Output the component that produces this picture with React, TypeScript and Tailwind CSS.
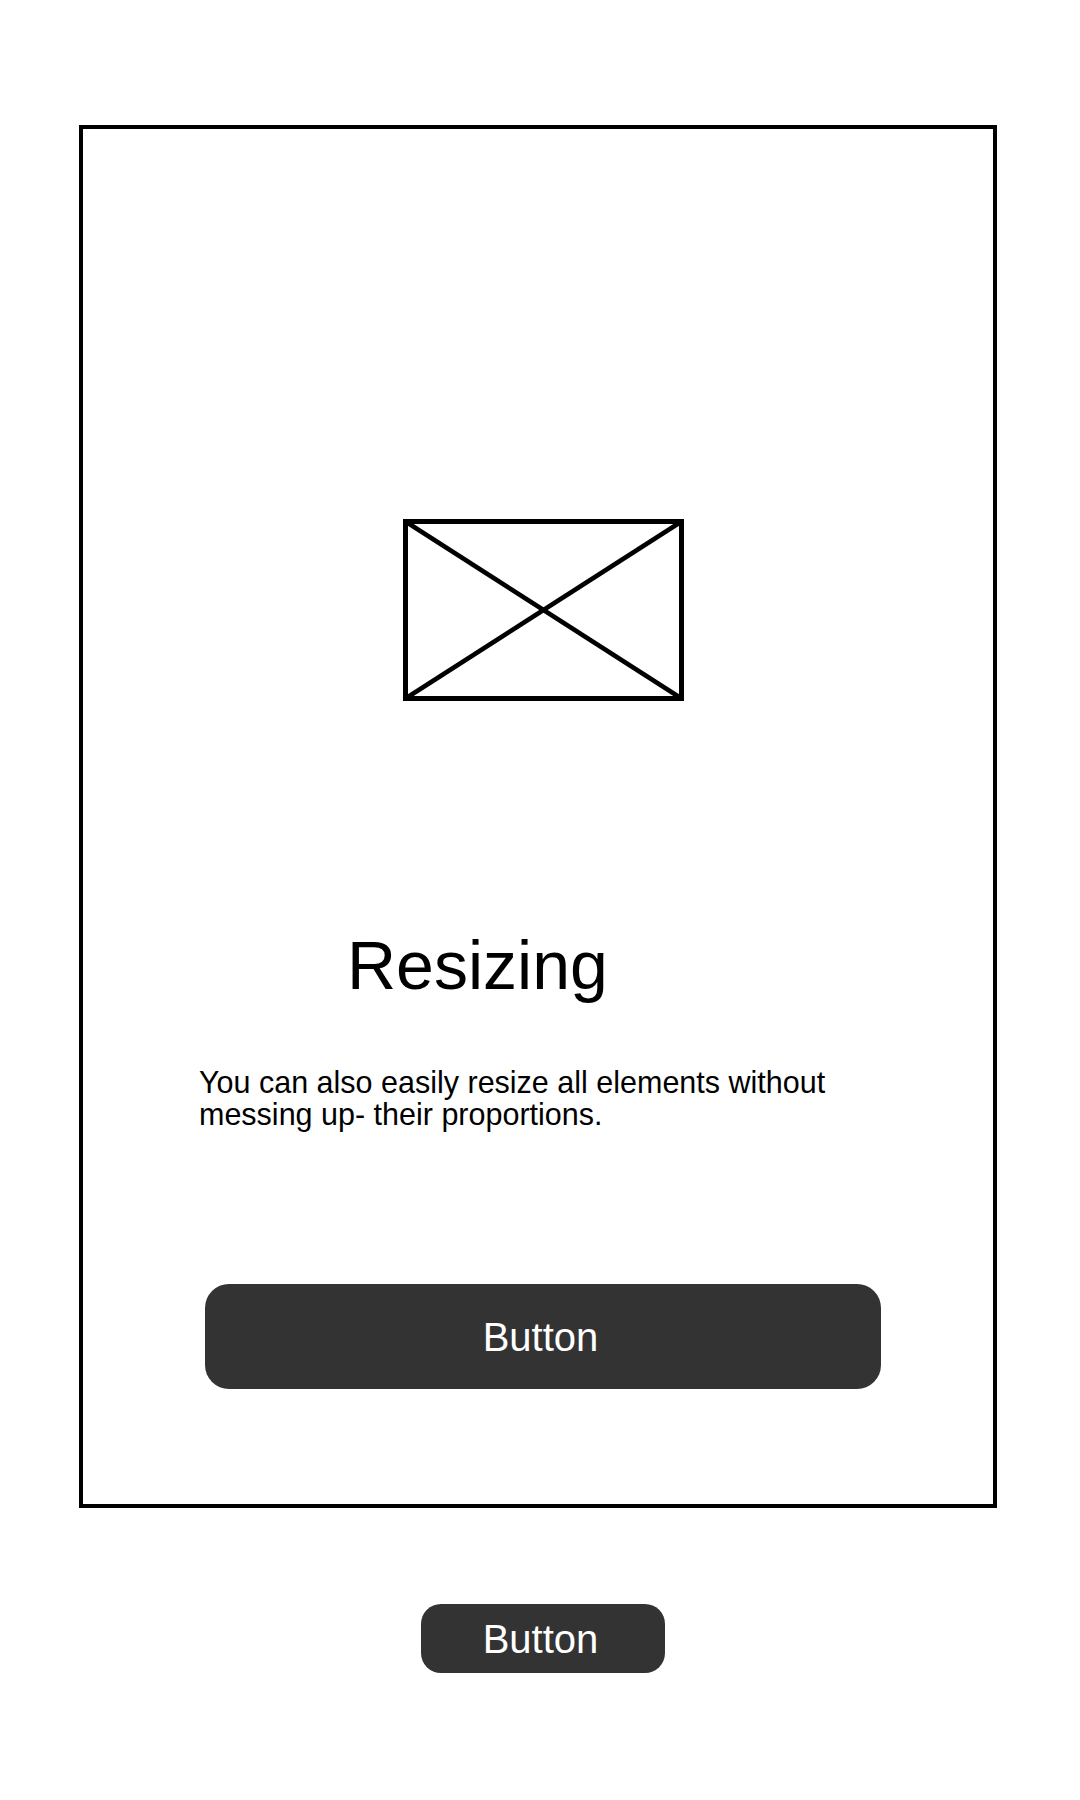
const font = { fontFamily: '"Liberation Sans", Arial, sans-serif' };

const ImagePlaceholder = () => (
  <svg width="281" height="182" viewBox="0 0 281 182" className="block">
    <rect x="2.5" y="2.5" width="276" height="177" fill="none" stroke="#000" strokeWidth="5" />
    <line x1="2.5" y1="2.5" x2="278.5" y2="179.5" stroke="#000" strokeWidth="4.5" />
    <line x1="278.5" y1="2.5" x2="2.5" y2="179.5" stroke="#000" strokeWidth="4.5" />
  </svg>
);

const App = () => {
  return (
    <div className="w-[1080px] min-h-[1800px] bg-white pt-[125px] text-black" style={font}>
      <div className="ml-[79px] w-[918px] h-[1383px] border-4 border-black flex flex-col items-start">
        <div className="mt-[390px] ml-[320px]">
          <ImagePlaceholder />
        </div>
        <h1 className="mt-[230px] ml-[264px] text-[68px] leading-[68px] font-normal">Resizing</h1>
        <p className="mt-[67px] ml-[116px] w-[650px] text-[30.5px] leading-[32px]">
          You can also easily resize all elements without messing up- their proportions.
        </p>
        <button className="mt-[154px] ml-[122px] w-[676px] h-[105px] rounded-3xl bg-[#333333] text-white text-[40px] leading-none pr-[5px]">
          Button
        </button>
      </div>
      <button className="mt-[96px] ml-[421px] w-[244px] h-[69px] rounded-[20px] bg-[#333333] text-white text-[40px] leading-none pr-[5px]">
        Button
      </button>
    </div>
  );
};

export default App;
